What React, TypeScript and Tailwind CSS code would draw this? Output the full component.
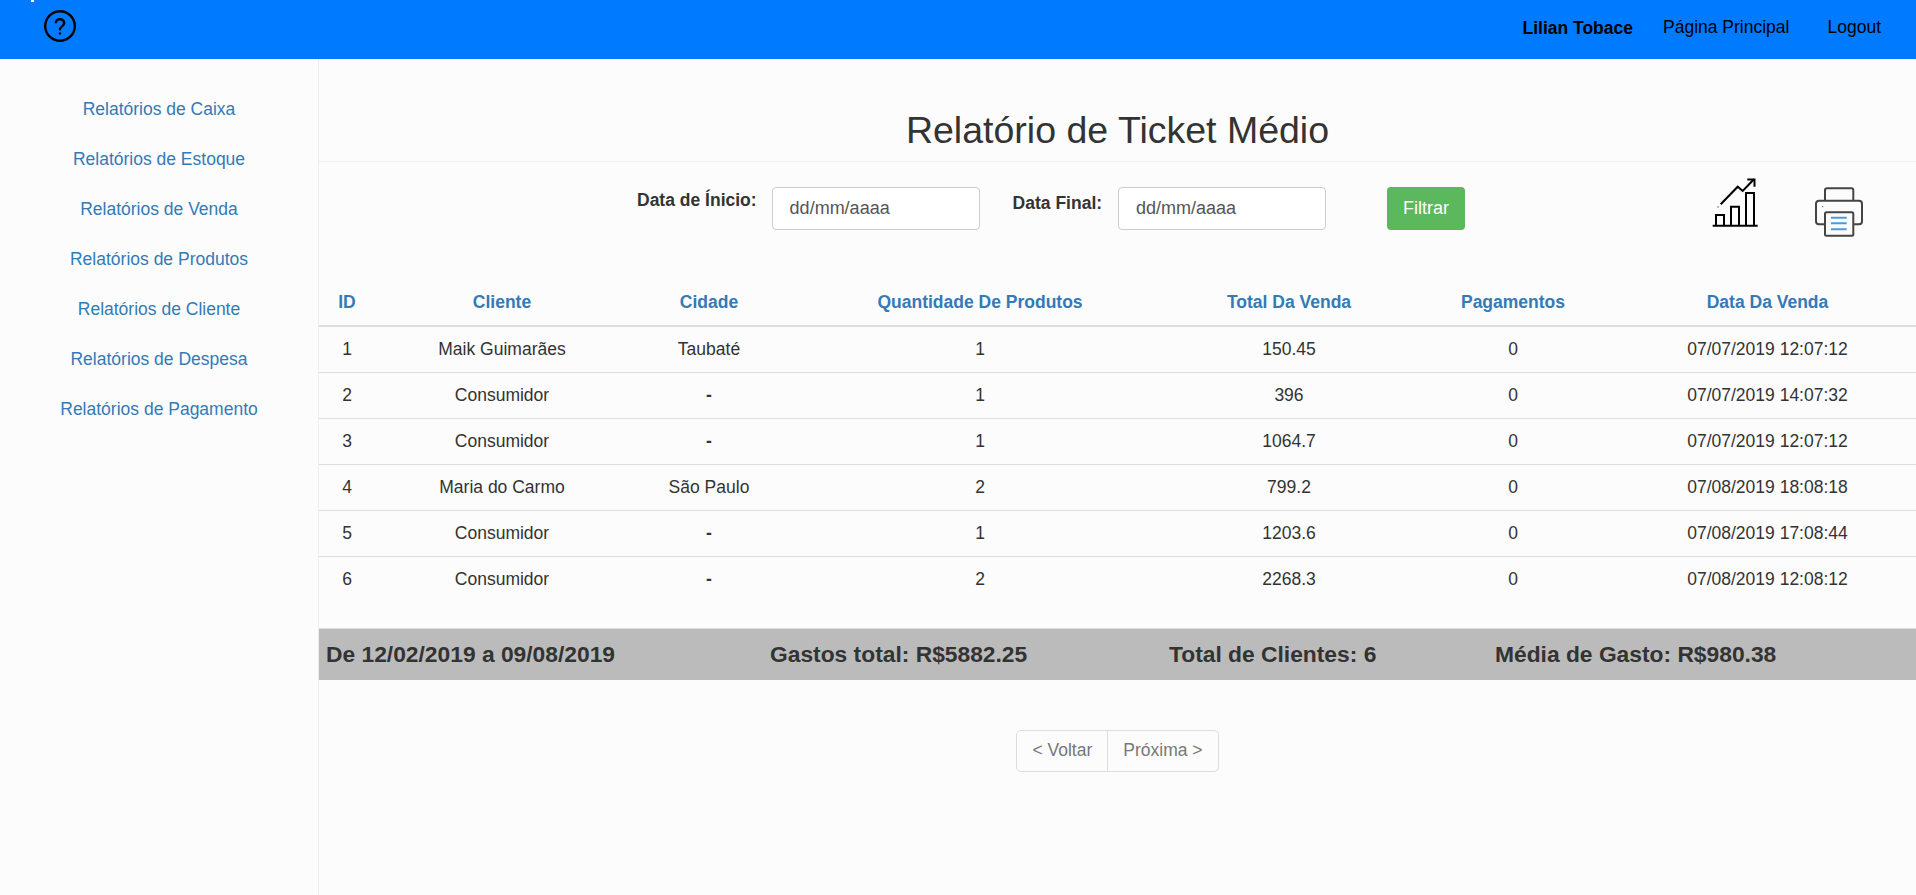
const sideLinks = [
  "Relatórios de Caixa",
  "Relatórios de Estoque",
  "Relatórios de Venda",
  "Relatórios de Produtos",
  "Relatórios de Cliente",
  "Relatórios de Despesa",
  "Relatórios de Pagamento",
]

const rows = [
  ["1", "Maik Guimarães", "Taubaté", "1", "150.45", "0", "07/07/2019 12:07:12"],
  ["2", "Consumidor", "-", "1", "396", "0", "07/07/2019 14:07:32"],
  ["3", "Consumidor", "-", "1", "1064.7", "0", "07/07/2019 12:07:12"],
  ["4", "Maria do Carmo", "São Paulo", "2", "799.2", "0", "07/08/2019 18:08:18"],
  ["5", "Consumidor", "-", "1", "1203.6", "0", "07/08/2019 17:08:44"],
  ["6", "Consumidor", "-", "2", "2268.3", "0", "07/08/2019 12:08:12"],
]

const headers = [
  { label: "ID", width: "w-[56px]" },
  { label: "Cliente", width: "w-[254px]" },
  { label: "Cidade", width: "w-[160px]" },
  { label: "Quantidade De Produtos", width: "w-[382px]" },
  { label: "Total Da Venda", width: "w-[236px]" },
  { label: "Pagamentos", width: "w-[212px]" },
  { label: "Data Da Venda", width: "w-[297px]" },
]

function HelpIcon() {
  return (
    <svg width="34" height="34" viewBox="0 0 34 34" fill="none" stroke="#000" strokeWidth="2.4" strokeLinecap="round">
      <circle cx="17" cy="17" r="14.8" />
      <path d="M12.8 13.2a4.3 4.3 0 0 1 8.4 1c0 2.8-4.2 3.4-4.2 6" />
      <path d="M17 24.400v.2" />
    </svg>
  )
}

function ChartIcon() {
  return (
    <svg width="47" height="49" viewBox="0 0 47 49" fill="none" stroke="#000" strokeWidth="2">
      <path d="M0.7 47.700h45" />
      <path d="M4 47.700V37h8v10.700M19 47.700V28.700h8v19M34 47.700V15h8v32.700" />
      <path d="M8.700 26.300 25.700 8.700l5 4.300L42 1.300" />
      <path d="M35.300 1.500H42.500V8.700" />
      <path d="M5.500 29h1" strokeWidth="1" />
    </svg>
  )
}

function PrinterIcon() {
  return (
    <svg width="48" height="50" viewBox="0 0 48 50" fill="none" stroke="#444" strokeWidth="2">
      <path d="M10 13.700V3.300a2 2 0 0 1 2-2h24.300a2 2 0 0 1 2 2v10.400" />
      <path d="M10 37.300H4a3 3 0 0 1-3-3V16.700a3 3 0 0 1 3-3h40a3 3 0 0 1 3 3v17.600a3 3 0 0 1-3 3h-5.700" />
      <rect x="10" y="25.300" width="28.300" height="23.400" rx="1.500" />
      <path d="M16 30.700h15.700M16 36.300h15.700M16 42.300h15.700" stroke="#4a9ce0" />
      <path d="M7.200 19.700h1" strokeWidth="1" />
    </svg>
  )
}

export default function App() {
  return (
    <div className="relative flex min-h-[895px] flex-col bg-[#fcfcfc] font-['Liberation_Sans',Arial,sans-serif] text-[17.5px] text-[#333]">
      <span className="absolute top-0 left-[31px] h-[2px] w-[3px] bg-white" />
      <header className="flex h-[59px] items-center justify-between bg-[#007bff] pr-[35px] pl-[43px] text-black">
        <div className="-mt-[7px]">
          <HelpIcon />
        </div>
        <div className="-mt-[4px] flex items-center">
          <span className="mt-[2px] mr-[30px] font-bold">Lilian Tobace</span>
          <a className="mr-[38px]">Página Principal</a>
          <a>Logout</a>
        </div>
      </header>

      <div className="flex flex-1">
        <aside className="w-[319px] shrink-0 border-r border-[#eee] pt-[25px]">
          <nav className="flex flex-col">
            {sideLinks.map((link) => (
              <a key={link} className="flex h-[50px] items-center justify-center text-[#337ab7]">
                {link}
              </a>
            ))}
          </nav>
        </aside>

        <main className="min-w-0 flex-1">
          <h1 className="flex h-[103px] items-end justify-center border-b border-[#eee] pb-[11px] text-[37.5px] leading-[40px]">
            Relatório de Ticket Médio
          </h1>

          <div className="flex h-[95px] items-start pt-[25px] pl-[318px]">
            <label className="mr-[15px] font-bold">Data de Ínicio:</label>
            <input
              readOnly
              value="dd/mm/aaaa"
              className="h-[43px] w-[208px] rounded border border-[#ccc] bg-white px-[17px] text-[18px] text-[#555]"
            />
            <label className="mt-[3px] mr-[16px] ml-[33px] font-bold">Data Final:</label>
            <input
              readOnly
              value="dd/mm/aaaa"
              className="h-[43px] w-[208px] rounded border border-[#ccc] bg-white px-[17px] text-[18px] text-[#555]"
            />
            <button className="ml-[61px] h-[43px] w-[78px] rounded bg-[#5cb85c] text-[18px] text-white">Filtrar</button>
            <div className="-mt-[9px] mr-[53px] ml-auto flex items-start gap-[56px]">
              <ChartIcon />
              <div className="mt-[9px]">
                <PrinterIcon />
              </div>
            </div>
          </div>

          <table className="w-full table-fixed border-collapse text-center">
            <thead>
              <tr className="h-[69px] border-b-2 border-[#ddd] text-[#337ab7]">
                {headers.map((h) => (
                  <th key={h.label} className={`${h.width} pt-[23px] font-bold`}>
                    {h.label}
                  </th>
                ))}
              </tr>
            </thead>
            <tbody>
              {rows.map((row) => (
                <tr key={row[0]} className="h-[46px] border-b border-[#ddd] last:border-b-0">
                  {row.map((cell, i) => (
                    <td key={i} className={cell === "-" ? "font-bold" : ""}>
                      {cell}
                    </td>
                  ))}
                </tr>
              ))}
            </tbody>
          </table>

          <div className="mt-[26px] flex h-[52px] items-center border-t border-[#ddd] bg-[#bbb] pl-[7px] text-[22.8px] font-bold">
            <span className="w-[444px]">De 12/02/2019 a 09/08/2019</span>
            <span className="w-[399px]">Gastos total: R$5882.25</span>
            <span className="w-[326px]">Total de Clientes: 6</span>
            <span>Média de Gasto: R$980.38</span>
          </div>

          <div className="mt-[50px] flex justify-center">
            <div className="flex h-[42px] items-center rounded-[5px] border border-[#ddd] text-[#777]">
              <a className="flex h-full items-center border-r border-[#ddd] px-[15px] pb-[2px]">&lt; Voltar</a>
              <a className="flex h-full items-center px-[15px] pb-[2px]">Próxima &gt;</a>
            </div>
          </div>
        </main>
      </div>
    </div>
  )
}
